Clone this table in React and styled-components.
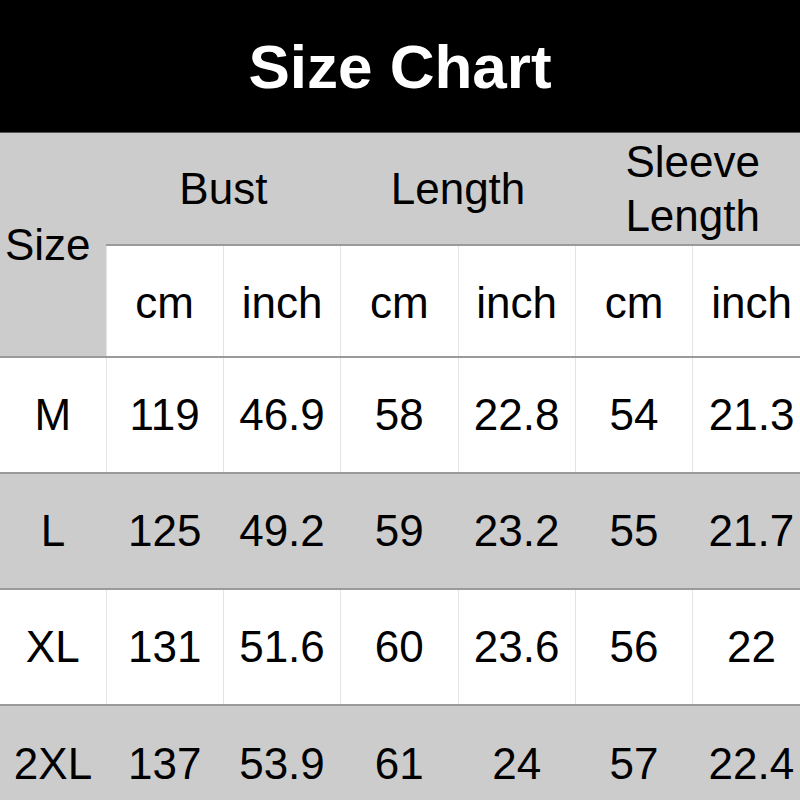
import styled, { createGlobalStyle } from "styled-components";

const GlobalStyle = createGlobalStyle`
  html, body {
    margin: 0;
    padding: 0;
    background: #ffffff;
    overflow: hidden;
  }
  body {
    font-family: "Liberation Sans", Arial, sans-serif;
  }
`;

const Page = styled.main`
  width: 800px;
  height: 800px;
  overflow: hidden;
  display: flex;
  flex-direction: column;
`;

const Title = styled.h1`
  margin: 0;
  height: 132px;
  flex-shrink: 0;
  display: flex;
  align-items: center;
  justify-content: center;
  background: #000000;
  color: #ffffff;
  font-size: 62px;
  font-weight: 700;
  border-bottom: 1px solid #555555;
`;

const Table = styled.table`
  width: 810px;
  table-layout: fixed;
  border-collapse: collapse;
  color: #000000;
  font-size: 44px;
`;

const Row = styled.tr`
  height: ${(p) => p.$height || 116}px;
`;

const Cell = styled.td`
  padding: 0;
  text-align: center;
  vertical-align: middle;
  line-height: 50px;
  background: ${(p) => (p.$shade ? "#cccccc" : "#ffffff")};
  border-top: ${(p) => (p.$top ? "2px solid #9a9a9a" : "none")};
  border-left: ${(p) => (p.$shade || p.$first ? "none" : "1px solid #e4e4e4")};
`;

const SubCell = styled(Cell)`
  padding-top: 4px;
`;

const GroupCell = styled(Cell)`
  line-height: ${(p) => (p.$double ? 54 : 50)}px;
`;

const SizeHead = styled(Cell)`
  padding-right: 10px;
`;

const groups = ["Bust", "Length", "Sleeve Length"];

const rows = [
  ["M", "119", "46.9", "58", "22.8", "54", "21.3"],
  ["L", "125", "49.2", "59", "23.2", "55", "21.7"],
  ["XL", "131", "51.6", "60", "23.6", "56", "22"],
  ["2XL", "137", "53.9", "61", "24", "57", "22.4"],
];

const App = () => {
  return (
    <Page>
      <GlobalStyle />
      <Title>Size Chart</Title>
      <Table>
        <colgroup>
          <col style={{ width: "106px" }} />
          {Array.from({ length: 6 }).map((_, i) => (
            <col key={i} style={{ width: "117.33px" }} />
          ))}
        </colgroup>
        <thead>
          <Row $height={112}>
            <SizeHead $shade rowSpan={2}>
              Size
            </SizeHead>
            {groups.map((g) => {
              const words = g.split(" ");
              return (
                <GroupCell key={g} $shade colSpan={2} $double={words.length > 1}>
                  {words.length > 1 ? (
                    <>
                      {words[0]}
                      <br />
                      {words[1]}
                    </>
                  ) : (
                    g
                  )}
                </GroupCell>
              );
            })}
          </Row>
          <Row $height={112}>
            {groups.map((g) => [
              <SubCell key={g + "cm"} $top>
                cm
              </SubCell>,
              <SubCell key={g + "in"} $top>
                inch
              </SubCell>,
            ])}
          </Row>
        </thead>
        <tbody>
          {rows.map((row, r) => (
            <Row key={row[0]}>
              {row.map((value, c) => (
                <Cell key={c} $top $first={c === 0} $shade={r % 2 === 1}>
                  {value}
                </Cell>
              ))}
            </Row>
          ))}
        </tbody>
      </Table>
    </Page>
  );
};

export default App;
